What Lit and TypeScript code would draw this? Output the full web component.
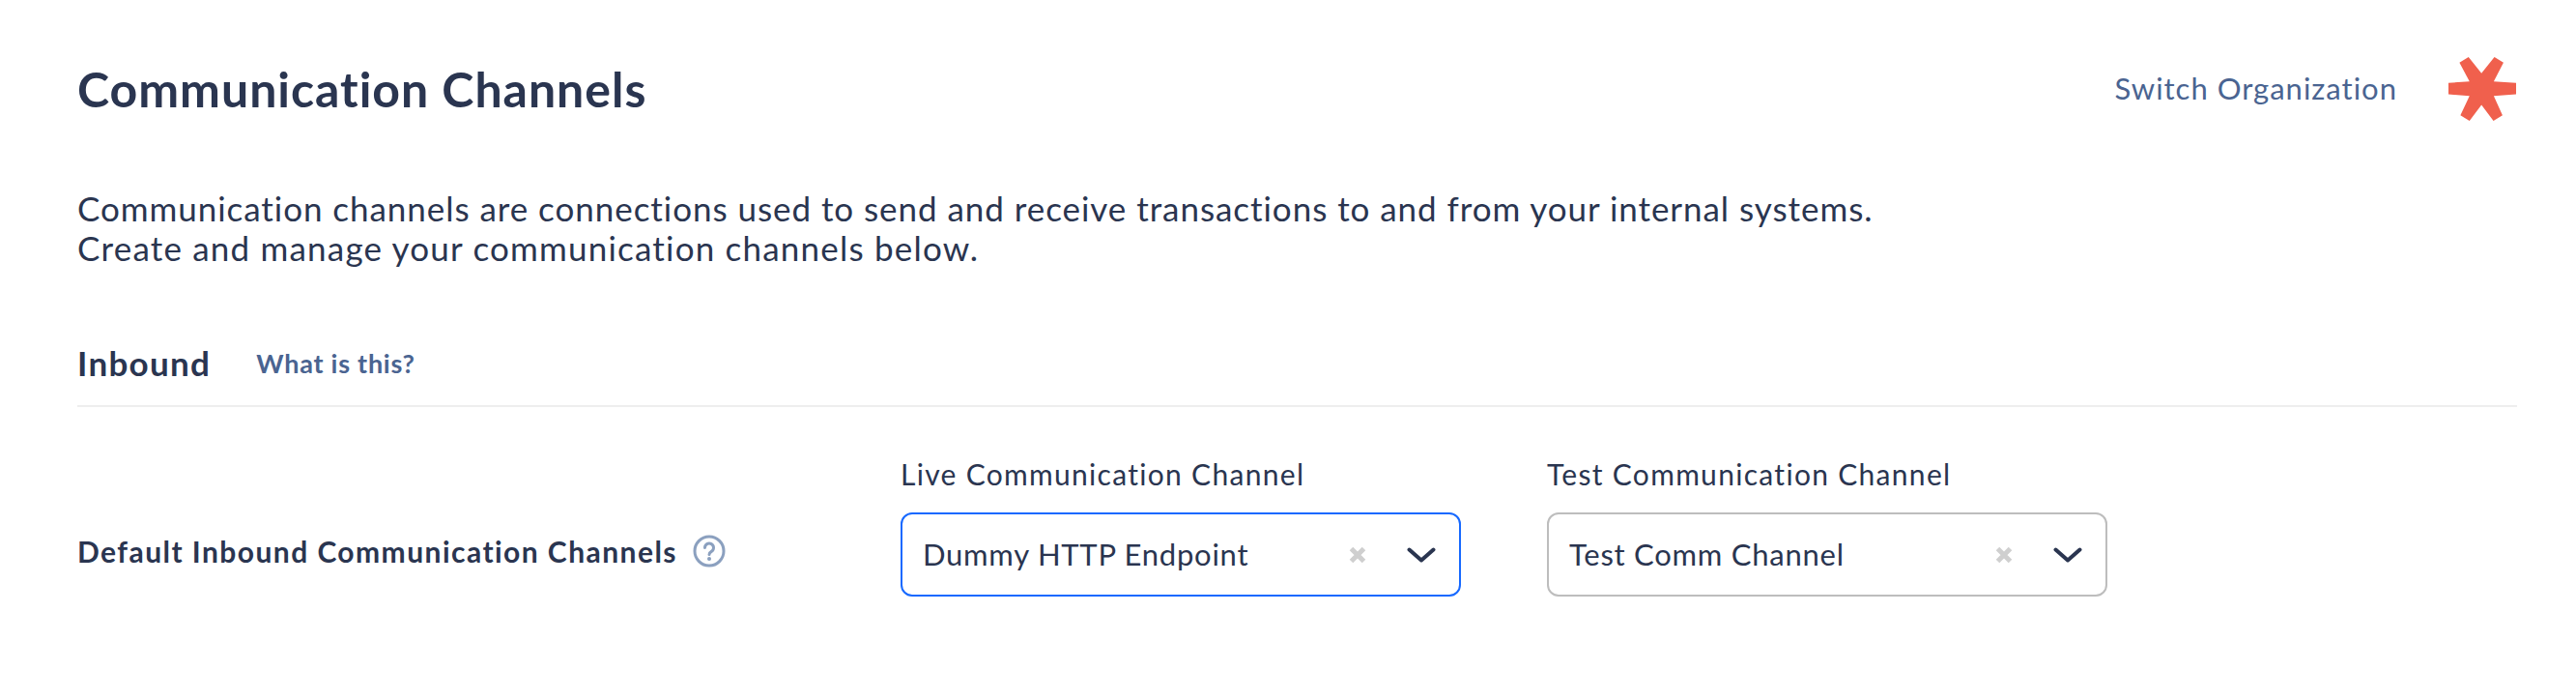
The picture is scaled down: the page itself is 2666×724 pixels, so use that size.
import { LitElement, html, css } from "lit";
import { customElement } from "lit/decorators.js";

@customElement("app-root")
export class AppRoot extends LitElement {
  static styles = css`
    :host {
      display: block;
      box-sizing: border-box;
      width: 100%;
      height: 724px;
      background: #fff;
      padding: 52px 61px 0 80px;
      color: #2a3550;
      font-family: Lato, "Noto Sans", sans-serif;
    }
    .header {
      display: flex;
      align-items: center;
      justify-content: space-between;
      height: 80px;
    }
    h1 {
      margin: 0;
      font-size: 50px;
      line-height: 80px;
      font-weight: 700;
      letter-spacing: 0.98px;
    }
    .header-right {
      display: flex;
      align-items: center;
      gap: 53px;
      padding-right: 1px;
    }
    .switch {
      font-size: 31px;
      letter-spacing: 1px;
      color: #4a6491;
      padding-bottom: 3px;
    }
    .logo {
      display: block;
      width: 70px;
      height: 66px;
    }
    .intro {
      margin: 63px 0 0;
      font-size: 35px;
      line-height: 41px;
      letter-spacing: 0.95px;
    }
    .intro .second {
      letter-spacing: 1.2px;
    }
    .section {
      display: flex;
      align-items: center;
      gap: 47px;
      margin-top: 76px;
      padding-bottom: 22px;
      border-bottom: 2px solid #eee;
    }
    h2 {
      margin: 0;
      font-size: 35px;
      line-height: 44px;
      font-weight: 700;
      letter-spacing: 1.3px;
    }
    .what {
      font-size: 27px;
      font-weight: 700;
      letter-spacing: 0.75px;
      color: #4a6491;
    }
    .row {
      display: flex;
      align-items: flex-end;
      margin-top: 49px;
    }
    .row-label {
      box-sizing: border-box;
      display: flex;
      align-items: center;
      gap: 16px;
      width: 852px;
      height: 87px;
      padding-bottom: 7px;
      font-size: 30px;
      font-weight: 700;
      letter-spacing: 1.45px;
    }
    .help {
      display: block;
      width: 34px;
      height: 34px;
    }
    .fields {
      display: flex;
      gap: 89px;
    }
    .field-label {
      font-size: 30px;
      line-height: 40px;
      letter-spacing: 1.3px;
      margin-bottom: 20px;
    }
    .select {
      box-sizing: border-box;
      display: flex;
      align-items: center;
      width: 580px;
      height: 87px;
      padding: 0 24px 0 21px;
      border: 2px solid #bdbdbd;
      border-radius: 12px;
      font-size: 31px;
      letter-spacing: 0.75px;
    }
    .select.focus {
      border-color: #1769ff;
    }
    .value {
      flex: 1;
      padding-bottom: 1px;
    }
    .clear {
      display: block;
      width: 18px;
      height: 18px;
      margin-right: 42px;
    }
    .chev {
      display: block;
      width: 30px;
      height: 16px;
    }
  `;

  private selectBox(value: string, focus: boolean) {
    return html`<div class="select ${focus ? "focus" : ""}">
      <span class="value">${value}</span>
      <svg class="clear" viewBox="0 0 18 18">
        <path d="M2.5 2.5L15.5 15.5M15.5 2.5L2.5 15.5" stroke="#cfcfcf" stroke-width="5" fill="none" />
      </svg>
      <svg class="chev" viewBox="0 0 30 16">
        <path d="M2.5 2.5L15 13.5L27.5 2.5" stroke="#2a3550" stroke-width="4" stroke-linecap="round" stroke-linejoin="round" fill="none" />
      </svg>
    </div>`;
  }

  render() {
    return html`
      <div class="header">
        <h1>Communication Channels</h1>
        <div class="header-right">
          <span class="switch">Switch Organization</span>
          <svg class="logo" viewBox="103 55 209 197">
            <polygon fill="#f0604d" points="205,105 245,55 273,72 243,130 312,135 312,170 243,175 270,235 242,252 205,203 168,252 140,235 168,175 103,170 103,135 168,130 137,72 165,55" />
          </svg>
        </div>
      </div>
      <p class="intro">
        <span>Communication channels are connections used to send and receive transactions to and from your internal systems.</span><br />
        <span class="second">Create and manage your communication channels below.</span>
      </p>
      <div class="section">
        <h2>Inbound</h2>
        <span class="what">What is this?</span>
      </div>
      <div class="row">
        <div class="row-label">
          <span>Default Inbound Communication Channels</span>
          <svg class="help" viewBox="0 0 34 34">
            <circle cx="17" cy="17" r="15" fill="none" stroke="#8ba0bf" stroke-width="3" />
            <path d="M12.5 13.5a4.5 4.5 0 1 1 6.8 3.9c-1.5.9-2.3 1.6-2.3 3.1" fill="none" stroke="#8ba0bf" stroke-width="3" stroke-linecap="round" />
            <circle cx="17" cy="25" r="2" fill="#8ba0bf" />
          </svg>
        </div>
        <div class="fields">
          <div>
            <div class="field-label">Live Communication Channel</div>
            ${this.selectBox("Dummy HTTP Endpoint", true)}
          </div>
          <div>
            <div class="field-label">Test Communication Channel</div>
            ${this.selectBox("Test Comm Channel", false)}
          </div>
        </div>
      </div>
    `;
  }
}
